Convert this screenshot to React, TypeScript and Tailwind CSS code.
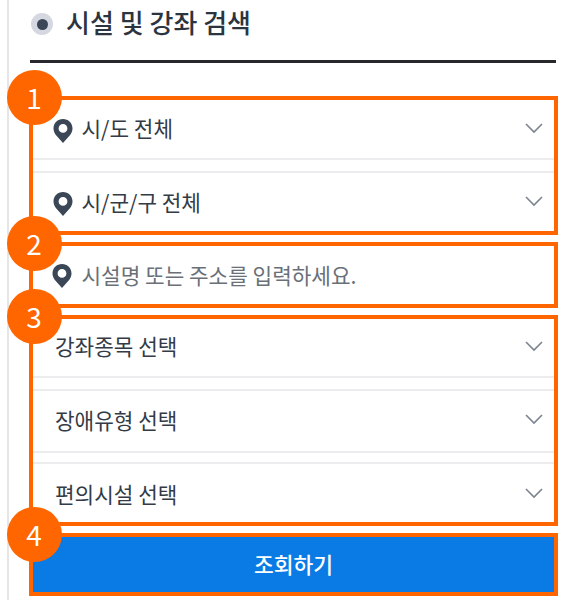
import type { ReactNode } from "react";

function Pin() {
  return (
    <svg width="20" height="24" viewBox="0 0 20 24" className="mt-[2px] shrink-0">
      <path
        fillRule="evenodd"
        d="M10 0C4.6 0 .5 4.1.5 9.4c0 2.5 1 4.7 2.6 6.8L10 24l6.9-7.8c1.6-2.1 2.6-4.3 2.6-6.8C19.5 4.1 15.4 0 10 0Zm0 5a4.4 4.4 0 1 1 0 8.8A4.4 4.4 0 0 1 10 5Z"
        fill="#3b4757"
      />
    </svg>
  );
}

function Chevron() {
  return (
    <svg width="20" height="12" viewBox="0 0 20 12" className="mb-[4px] shrink-0">
      <path d="M2 2l8 8 8-8" fill="none" stroke="#7b8490" strokeWidth="1.6" />
    </svg>
  );
}

function Box({ n, children, className }: { n: number; children: ReactNode; className: string }) {
  return (
    <div className={`relative border-[4.5px] border-[#ff6600] ${className}`}>
      <div className="absolute left-[-26.5px] top-[-30.5px] z-10 flex h-[55px] w-[55px] items-center justify-center rounded-full bg-[#ff6600] text-[28px] text-white">
        {n}
      </div>
      {children}
    </div>
  );
}

function Row({ label, pin, h, pt, pl }: { label: string; pin?: boolean; h: string; pt: string; pl: string }) {
  return (
    <div className={`flex items-center pr-[10px] ${pl} ${h} ${pt}`}>
      {pin && <Pin />}
      <span className={`mb-[3px] flex-1 text-[21.3px] text-[#333b47] ${pin ? "ml-[8.5px]" : ""}`}>{label}</span>
      <Chevron />
    </div>
  );
}

function Gap({ h }: { h: string }) {
  return <div className={`border-y-2 border-[#ececee] ${h}`} />;
}

export default function App() {
  return (
    <div className="h-[600px] w-[569px] overflow-hidden bg-white font-['Noto_Sans_CJK_KR','Noto_Sans',sans-serif]">
      <div className="ml-[7px] flex h-full flex-col border-l-2 border-[#e6e6e6] pl-[20px] pr-[11px]">
        <div className="flex h-[60px] items-start pl-[2px]">
          <div className="mt-[13px] flex h-[22px] w-[22px] items-center justify-center rounded-full bg-[#d5d8e1]">
            <div className="h-[11px] w-[11px] rounded-full bg-[#3b4757]" />
          </div>
          <div className="ml-[13px] text-[26px] leading-[43px] font-medium text-[#2c3440]">시설 및 강좌 검색</div>
        </div>
        <div className="ml-[1px] mr-[2px] h-[3px] bg-[#26282c]" />
        <Box n={1} className="mt-[33px] h-[139px]">
          <Row label="시/도 전체" pin h="h-[58px]" pt="pt-[1px]" pl="pl-[20px]" />
          <Gap h="h-[15px]" />
          <Row label="시/군/구 전체" pin h="h-[57px]" pt="pt-[3px]" pl="pl-[20px]" />
        </Box>
        <Box n={2} className="mt-[7px] h-[66px]">
          <div className="flex h-full items-center pl-[19px]">
            <Pin />
            <span className="mb-[1px] ml-[9.5px] text-[21.3px] text-[#6a7078]">시설명 또는 주소를 입력하세요.</span>
          </div>
        </Box>
        <Box n={3} className="mt-[7px] h-[211px]">
          <Row label="강좌종목 선택" h="h-[57px]" pt="pt-[0px]" pl="pl-[22px]" />
          <Gap h="h-[15px]" />
          <Row label="장애유형 선택" h="h-[60px]" pt="pt-[0px]" pl="pl-[22px]" />
          <Gap h="h-[13px]" />
          <Row label="편의시설 선택" h="h-[57px]" pt="pt-[5px]" pl="pl-[22px]" />
        </Box>
        <Box n={4} className="mt-[7px] h-[63px]">
          <div className="flex h-full items-center justify-center bg-[#0a7be4] text-[21.5px] font-medium text-white">조회하기</div>
        </Box>
      </div>
    </div>
  );
}
